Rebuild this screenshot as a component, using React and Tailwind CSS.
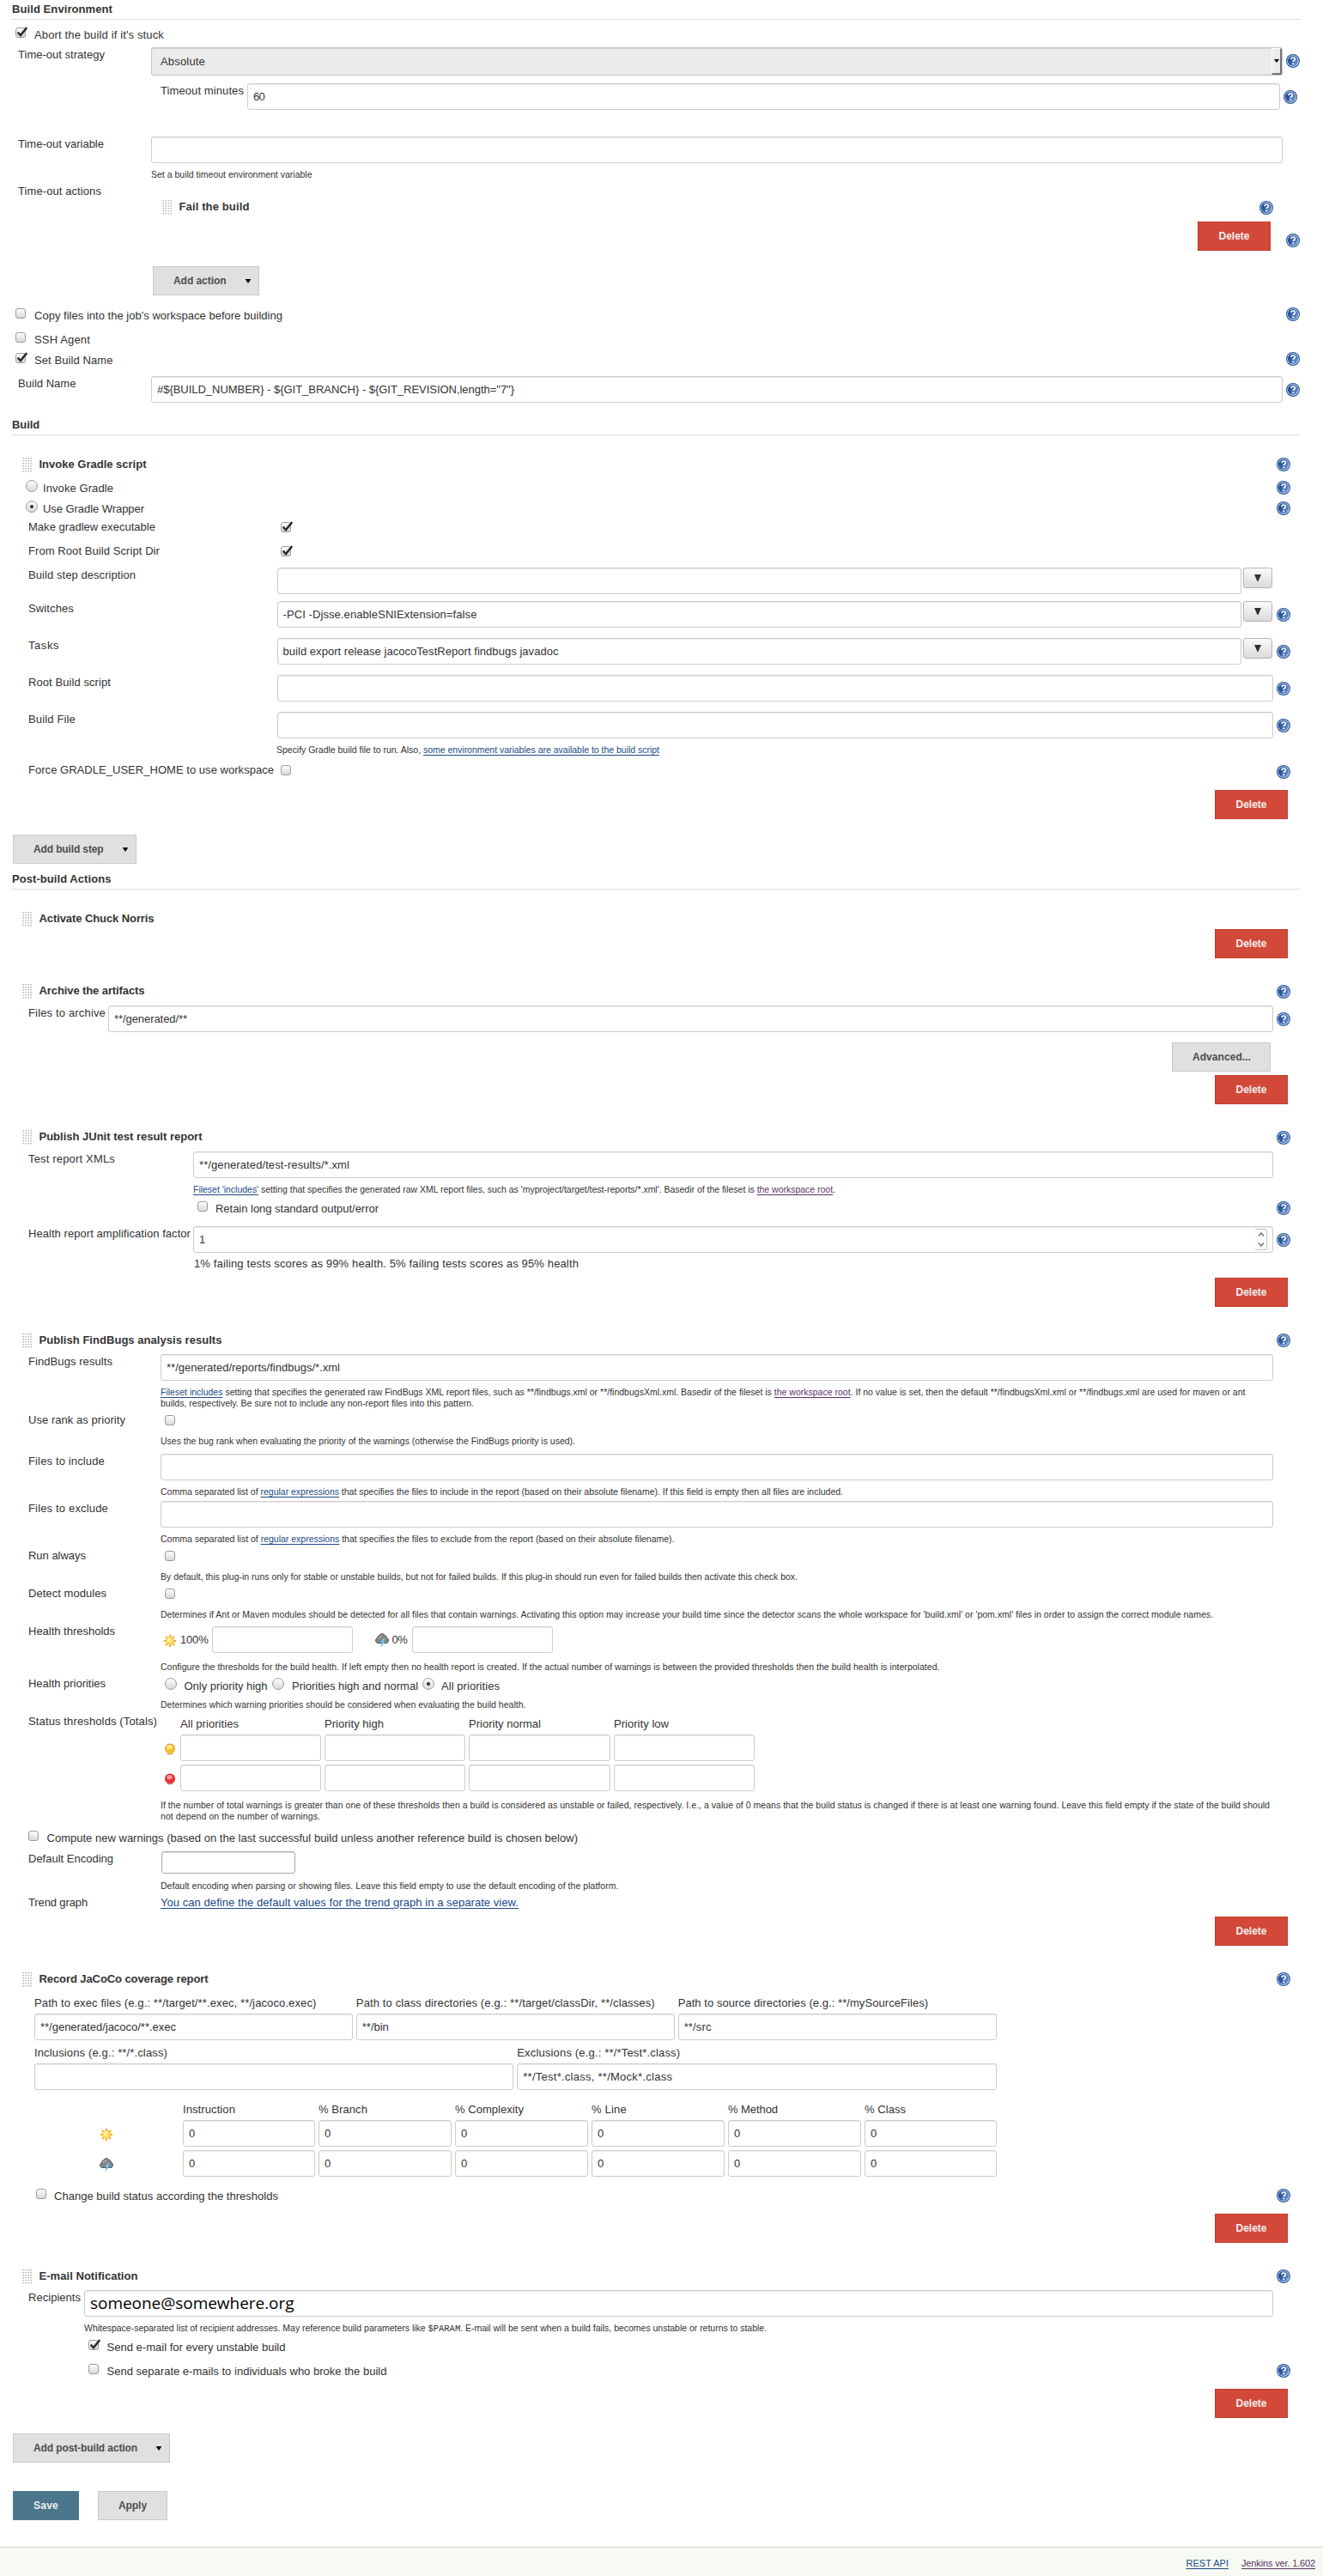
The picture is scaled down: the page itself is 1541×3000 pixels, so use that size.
import { useLayoutEffect, useRef, useState } from 'react';

/* Text whose letter spacing is adjusted so that the run spans `w` pixels. */
function T({ w, className = '', children }) {
  const ref = useRef(null);
  const [spacing, setSpacing] = useState(0);
  useLayoutEffect(() => {
    if (!w || !ref.current) return;
    const el = ref.current;
    el.style.letterSpacing = '0px';
    const natural = el.getBoundingClientRect().width;
    const next = (w - natural) / el.textContent.length;
    el.style.letterSpacing = `${next}px`;
    setSpacing(next);
  }, [w]);
  return (
    <span ref={ref} className={`inline-block shrink-0 whitespace-pre ${className}`} style={{ letterSpacing: `${spacing}px` }}>
      {children}
    </span>
  );
}

function Help({ className = '' }) {
  return (
    <svg viewBox="0 0 16 16" className={`h-4 w-4 shrink-0 ${className}`}>
      <defs>
        <linearGradient id="helpFill" x1="0" y1="0" x2="1" y2="0.6">
          <stop offset="0.2" stopColor="#1f4a94" />
          <stop offset="0.55" stopColor="#3763a6" />
          <stop offset="1" stopColor="#6f95cb" />
        </linearGradient>
      </defs>
      <circle cx="8" cy="8" r="8" fill="#2c5aa0" />
      <circle cx="8" cy="8" r="6.8" fill="#dfe9f6" />
      <circle cx="8" cy="8" r="6.1" fill="url(#helpFill)" />
      <path d="M5.9 6.1C6 4.6 7 4 8.1 4c1.2 0 2.2.7 2.2 1.9 0 1.6-2.1 1.6-2.1 3.2" fill="none" stroke="#fff" strokeWidth="1.6" />
      <rect x="7.3" y="10.4" width="1.8" height="1.8" fill="#fff" />
    </svg>
  );
}

function Sun({ className = '' }) {
  return (
    <svg viewBox="0 0 16 16" className={`h-4 w-4 shrink-0 ${className}`}>
      <path d="M8 .8v14.4M.8 8h14.4M2.9 2.9l10.2 10.2M13.1 2.9 2.9 13.1" stroke="#f5a73b" strokeWidth="1.9" />
      <circle cx="8" cy="8" r="5.1" fill="#f8b83c" />
      <circle cx="7.8" cy="7.8" r="4.4" fill="#fddc5c" />
      <circle cx="7" cy="7" r="2.4" fill="#fef3a6" />
    </svg>
  );
}

function Storm({ className = '' }) {
  return (
    <svg viewBox="0 0 16 16" className={`h-4 w-4 shrink-0 ${className}`}>
      <path d="M3.2 11.5C1.5 11.300.6 10.100.6 8.400c0-1.400.8-2.400 2-2.800C2.400 4.200 3.200 3.200 4.600 3 5.300 1.500 6.500.700 8 .700s2.800.8 3.400 2.200c1.500.1 2.400 1.200 2.200 2.700 1.200.4 1.900 1.400 1.900 2.800 0 1.700-1 2.900-2.700 3.100z" fill="#858684" stroke="#4c4d4b" />
      <path d="M4 5.600c.6-.9 1.300-1.200 2.200-1.200.4-1.200 1.200-1.900 2.300-1.900" fill="none" stroke="#b4b5b2" strokeWidth="1.200" />
      <path d="M9.800 6 6.200 10.700h2L6.800 15.600l5-6.300H9.500L12 6z" fill="#7fd4fb" stroke="#3fa9e6" strokeWidth=".5" />
    </svg>
  );
}

function Ball({ red }) {
  return (
    <svg viewBox="0 0 12 14" className="h-[14px] w-3 shrink-0">
      <ellipse cx="6" cy="12.300" rx="3.600" ry="1.200" fill="#b5b5b5" />
      <circle cx="6" cy="6.500" r="6" fill={red ? '#d3222a' : '#e3a32b'} />
      <circle cx="6" cy="6.700" r="5.200" fill={red ? '#ef3338' : '#fbc333'} />
      <ellipse cx="5.400" cy="4.600" rx="3.200" ry="2.600" fill={red ? '#fb9a98' : '#fde98c'} />
    </svg>
  );
}

function Grip() {
  const dots = [];
  for (let y = 0; y < 6; y++) for (let x = 0; x < 4; x++) dots.push([x * 3, y * 3]);
  return (
    <svg viewBox="0 0 12 17" className="h-[17px] w-3 shrink-0">
      {dots.map(([x, y]) => (
        <g key={`${x}-${y}`}>
          <rect x={x} y={y} width="2" height="1.500" fill="#d4d4d4" />
          <rect x={x + 1} y={y} width="1" height="1" fill="#b0b0b0" />
        </g>
      ))}
    </svg>
  );
}

function Check({ on, className = '' }) {
  return (
    <span className={`relative h-3 w-3 shrink-0 rounded-[3px] border border-[#9a9d98] bg-linear-to-b from-[#fdfdfd] to-[#d9d9d9] ${className}`}>
      {on && (
        <svg viewBox="0 0 16 14" className="absolute -top-[2px] -left-px h-[13px] w-4">
          <path d="M2.200 7.200 5.800 10.800 13.600 1.200" fill="none" stroke="#2b2f30" strokeWidth="2.700" />
        </svg>
      )}
    </span>
  );
}

function Radio({ on, className = '' }) {
  return (
    <span className={`flex h-[14px] w-[14px] shrink-0 items-center justify-center rounded-full border border-[#9a9d98] bg-linear-to-b from-[#fdfdfd] to-[#d9d9d9] ${className}`}>
      {on && <span className="h-1 w-1 rounded-full bg-[#2b2f30]" />}
    </span>
  );
}

function Input({ className = 'flex-1', value, vw, children }) {
  return (
    <div className={`flex h-[31px] items-center rounded-[3px] border border-[#ccc] bg-white pl-[6px] shadow-[inset_0_1px_1px_rgba(0,0,0,0.08)] ${className}`}>
      {value && <T w={vw}>{value}</T>}
      {children}
    </div>
  );
}

function Heading({ w, children }) {
  return (
    <h2 className="ml-[13px] h-[23px] w-[1501px] border-b border-[#ddd] pt-[3px] pl-px font-bold">
      <T w={w}>{children}</T>
    </h2>
  );
}

/* Title bar of a draggable block. */
function BlockTitle({ w, h = 'h-[25px]', help = true, helpTop = 'mt-px', children }) {
  return (
    <div className={`flex w-[1503px] pl-[26px] ${h}`}>
      <Grip />
      <T w={w} className="ml-[7.500px] font-bold">{children}</T>
      {help && <Help className={`ml-auto ${helpTop}`} />}
    </div>
  );
}

/* Labelled text field inside a block. */
function Field({ label, lw, labelW, h, value, vw, help, menu, children }) {
  return (
    <div className={`flex w-[1503px] items-start pl-[33px] ${h}`}>
      <div className={`shrink-0 pt-px ${labelW}`}>
        <T w={lw}>{label}</T>
      </div>
      {children || <Input value={value} vw={vw} />}
      {menu && (
        <div className="mr-px ml-[2px] flex h-6 w-[34px] shrink-0 items-center justify-center rounded-[3px] border border-[#b4b4b4] bg-linear-to-b from-[#fafafa] to-[#dadada]">
          <svg viewBox="0 0 8 8" className="h-2 w-2"><path d="M0 0h8L4.500 8h-1z" fill="#2e3436" /></svg>
        </div>
      )}
      <div className="ml-1 w-4 shrink-0 pt-2">{help && <Help />}</div>
    </div>
  );
}

/* Same as Field for the outer form, whose right edge is 11px further. */
function OuterField({ label, lw, h, help, children }) {
  return (
    <div className={`flex w-[1514px] items-start pl-[21px] ${h}`}>
      <div className="w-[155px] shrink-0 pt-px">
        <T w={lw}>{label}</T>
      </div>
      {children}
      <div className="ml-1 w-4 shrink-0 pt-[8px]">{help && <Help />}</div>
    </div>
  );
}

function Note({ h, pl, lines }) {
  return (
    <div className={`pt-px text-[10.500px] leading-[13px] ${pl} ${h}`}>
      {lines.map(([w, content], i) => (
        <div key={i} className="h-[13px]">
          <T w={w}>{content}</T>
        </div>
      ))}
    </div>
  );
}

function A({ children, visited }) {
  return <a className={`underline underline-offset-[1.500px] ${visited ? 'text-[#5c3566]' : 'text-[#204a87]'}`}>{children}</a>;
}

function CheckRow({ pl, h, on, label, w, gap = 'ml-[10px]', help, outer, helpTop = '' }) {
  return (
    <div className={`flex items-start ${outer ? 'w-[1514px]' : 'w-[1503px]'} ${pl} ${h}`}>
      <Check on={on} />
      <T w={w} className={`mt-px ${gap}`}>{label}</T>
      {help && <Help className={`ml-auto ${helpTop}`} />}
    </div>
  );
}

function RadioRow({ h, on, label, w }) {
  return (
    <div className={`flex w-[1503px] items-start pl-[30px] ${h}`}>
      <Radio on={on} />
      <T w={w} className="mt-[2px] ml-[6px]">{label}</T>
      <Help className="mt-px ml-auto" />
    </div>
  );
}

function LabelCheck({ label, w, labelW, h, on, help }) {
  return (
    <div className={`flex w-[1503px] items-start pl-[33px] ${h}`}>
      <div className={`-mt-[2px] shrink-0 ${labelW}`}><T w={w}>{label}</T></div>
      <Check on={on} />
      {help && <Help className="ml-auto" />}
    </div>
  );
}

function Delete() {
  return (
    <button className="flex h-[34px] w-[85px] items-center justify-center border border-[#c23b2b] bg-[#d24939] text-[12px] font-bold text-[#f5eeee]">
      <T w={36}>Delete</T>
    </button>
  );
}

function DeleteRow({ h }) {
  return <div className={`flex w-[1500px] justify-end ${h}`}><Delete /></div>;
}

function GreyButton({ className, w, menu, children }) {
  return (
    <button className={`flex h-[34px] items-center border border-[#c9c9c9] bg-[#e0e0e0] pl-[23px] text-[12px] font-bold text-[#4d4d4d] ${className}`}>
      <T w={w}>{children}</T>
      {menu && (
        <svg viewBox="0 0 8 6" className="mr-[8px] ml-auto h-[5px] w-2"><path d="M0 0h8L4 6z" fill="#000" /></svg>
      )}
    </button>
  );
}

const NOTE187 = 'pl-[187px]';
const LABELS = 'w-[154px]';

export default function App() {
  return (
    <main className="h-[3000px] w-[1541px] overflow-hidden bg-white font-['Liberation_Sans',Arial,sans-serif] text-[13px] leading-[16px] text-[#333]">
      <section>
        <Heading w={117}>Build Environment</Heading>
        <div className="pt-[9px]">
          <CheckRow outer on pl="pl-[18px]" h="h-[23px]" w={151} label="Abort the build if it's stuck" />
        </div>
        <OuterField label="Time-out strategy" lw={101} h="h-[42px]" help>
          <div className="flex h-[33px] flex-1 items-center rounded-[3px] border border-[#c4c4c4] bg-[#ebebeb] pl-[10px] shadow-[inset_0_1px_1px_rgba(0,0,0,0.1)]">
            <T w={52}>Absolute</T>
            <span className="ml-auto flex h-[31px] w-3 items-center justify-center border-t border-r-2 border-b-2 border-l border-t-white border-r-[#777] border-b-[#777] border-l-white bg-[#ececec]">
              <svg viewBox="0 0 6 4" className="h-1 w-[6px]"><path d="M0 0h6L3 4z" fill="#000" /></svg>
            </span>
          </div>
        </OuterField>
        <div className="flex h-[62px] w-[1511px] items-start pl-[187px]">
          <div className="w-[101px] shrink-0 pt-px"><T w={97}>Timeout minutes</T></div>
          <Input value="60" vw={13} />
          <Help className="mt-2 ml-1" />
        </div>
        <OuterField label="Time-out variable" lw={100} h="h-[37px]"><Input /></OuterField>
        <Note pl="pl-[176px]" h="h-[19px]" lines={[[187.500, 'Set a build timeout environment variable']]} />
        <div className="flex h-[95px] w-[1514px] items-start pl-[21px]">
          <div className="w-[168px] shrink-0"><T w={97}>Time-out actions</T></div>
          <div className="w-[1294px] pt-[18px]">
            <div className="flex h-[25px]">
              <Grip />
              <T w={82} className="ml-[7.500px] font-bold">Fail the build</T>
              <Help className="mt-px ml-auto" />
            </div>
            <div className="flex justify-end pr-[3px]"><Delete /></div>
          </div>
          <Help className="mt-[57px] ml-auto" />
        </div>
        <div className="h-[49px] pl-[178px]">
          <GreyButton menu className="w-[124px]" w={61.500}>Add action</GreyButton>
        </div>
        <CheckRow outer help helpTop="-mt-px" pl="pl-[18px]" h="h-[28px]" w={289} label="Copy files into the job's workspace before building" />
        <CheckRow outer pl="pl-[18px]" h="h-[24px]" w={65} label="SSH Agent" />
        <CheckRow outer on help helpTop="-mt-px" pl="pl-[18px]" h="h-[27px]" w={91.500} label="Set Build Name" />
        <OuterField label="Build Name" lw={67.500} h="h-[46px]" help>
          <Input value={'#${BUILD_NUMBER} - ${GIT_BRANCH} - ${GIT_REVISION,length="7"}'} vw={416} />
        </OuterField>
      </section>

      <section>
        <Heading w={32}>Build</Heading>
        <div className="pt-[26px]">
          <BlockTitle h="h-[26px]" helpTop="" w={125}>Invoke Gradle script</BlockTitle>
        </div>
        <RadioRow h="h-[24px]" label="Invoke Gradle" w={82} />
        <RadioRow on h="h-[25px]" label="Use Gradle Wrapper" w={118} />
        <LabelCheck on labelW="w-[294px]" h="h-[28px]" label="Make gradlew executable" w={148} />
        <LabelCheck on labelW="w-[294px]" h="h-[25px]" label="From Root Build Script Dir" w={153} />
        <Field labelW="w-[289.500px]" label="Build step description" lw={125} h="h-[39px]" menu />
        <Field labelW="w-[289.500px]" label="Switches" lw={53} h="h-[43px]" menu help value="-PCI -Djsse.enableSNIExtension=false" vw={226} />
        <Field labelW="w-[289.500px]" label="Tasks" lw={36} h="h-[43px]" menu help value="build export release jacocoTestReport findbugs javadoc" vw={321} />
        <Field labelW="w-[289.500px]" label="Root Build script" lw={96} h="h-[43px]" help />
        <Field labelW="w-[289.500px]" label="Build File" lw={55} h="h-[37px]" help />
        <Note pl="pl-[322px]" h="h-[25px]" lines={[[446, <>Specify Gradle build file to run. Also, <A>some environment variables are available to the build script</A></>]]} />
        <LabelCheck help labelW="w-[294px]" h="h-[29px]" label="Force GRADLE_USER_HOME to use workspace" w={286} />
        <DeleteRow h="h-[52px]" />
        <div className="h-[41px] pl-[15px]">
          <GreyButton menu className="w-[144px]" w={81.500}>Add build step</GreyButton>
        </div>
      </section>

      <section>
        <Heading w={115.500}>Post-build Actions</Heading>
        <div className="pt-[26px]">
          <BlockTitle h="h-[20px]" help={false} w={134}>Activate Chuck Norris</BlockTitle>
          <DeleteRow h="h-[64px]" />
        </div>

        <BlockTitle w={123}>Archive the artifacts</BlockTitle>
        <Field labelW="w-[93px]" label="Files to archive" lw={90} h="h-[43px]" help value="**/generated/**" vw={85} />
        <div className="flex h-[38px] w-[1480px] justify-end">
          <GreyButton className="w-[115px]" w={68}>Advanced...</GreyButton>
        </div>
        <DeleteRow h="h-[64px]" />

        <BlockTitle w={190}>Publish JUnit test result report</BlockTitle>
        <Field labelW="w-[192px]" label="Test report XMLs" lw={101} h="h-[37px]" value="**/generated/test-results/*.xml" vw={175} />
        <Note pl="pl-[225px]" h="h-[21px]" lines={[[748, <><A>Fileset 'includes'</A> setting that specifies the generated raw XML report files, such as 'myproject/target/test-reports/*.xml'. Basedir of the fileset is <A visited>the workspace root</A>.</>]]} />
        <CheckRow help pl="pl-[230px]" h="h-[29px]" gap="ml-[9px]" w={190} label="Retain long standard output/error" />
        <Field labelW="w-[192px]" label="Health report amplification factor" lw={189} h="h-[36px]" help>
          <Input value="1" vw={6}>
            <span className="mr-[6px] ml-auto flex h-[25px] w-[14px] flex-col items-center justify-around rounded-r-[3px] border border-l-0 border-[#c4c4c4] bg-[#fafafa]">
              <svg viewBox="0 0 8 5" className="h-[5px] w-2"><path d="M1 4.500 4 1l3 3.500" fill="none" stroke="#777" strokeWidth="1.500" /></svg>
              <svg viewBox="0 0 8 5" className="h-[5px] w-2"><path d="M1 .5 4 4 7 .5" fill="none" stroke="#777" strokeWidth="1.500" /></svg>
            </span>
          </Input>
        </Field>
        <div className="h-[24px] pl-[226px]"><T w={448}>1% failing tests scores as 99% health. 5% failing tests scores as 95% health</T></div>
        <DeleteRow h="h-[65px]" />

        <BlockTitle h="h-[24px]" helpTop="" w={213}>Publish FindBugs analysis results</BlockTitle>
        <Field labelW={LABELS} label="FindBugs results" lw={98} h="h-[37px]" value="**/generated/reports/findbugs/*.xml" vw={202} />
        <Note
          pl={NOTE187}
          h="h-[34px]"
          lines={[
            [1263.500, <><A>Fileset includes</A> setting that specifies the generated raw FindBugs XML report files, such as **/findbugs.xml or **/findbugsXml.xml. Basedir of the fileset is <A visited>the workspace root</A>. If no value is set, then the default **/findbugsXml.xml or **/findbugs.xml are used for maven or ant</>],
            [365, 'builds, respectively. Be sure not to include any non-report files into this pattern.'],
          ]}
        />
        <LabelCheck labelW="w-[159px]" h="h-[23px]" label="Use rank as priority" w={113} />
        <Note pl={NOTE187} h="h-[22px]" lines={[[483, 'Uses the bug rank when evaluating the priority of the warnings (otherwise the FindBugs priority is used).']]} />
        <Field labelW={LABELS} label="Files to include" lw={89} h="h-[37px]" />
        <Note pl={NOTE187} h="h-[18px]" lines={[[795, <>Comma separated list of <A>regular expressions</A> that specifies the files to include in the report (based on their absolute filename). If this field is empty then all files are included.</>]]} />
        <Field labelW={LABELS} label="Files to exclude" lw={93} h="h-[37px]" />
        <Note pl={NOTE187} h="h-[21px]" lines={[[598.500, <>Comma separated list of <A>regular expressions</A> that specifies the files to exclude from the report (based on their absolute filename).</>]]} />
        <LabelCheck labelW="w-[159px]" h="h-[23px]" label="Run always" w={67} />
        <Note pl={NOTE187} h="h-[21px]" lines={[[742, 'By default, this plug-in runs only for stable or unstable builds, but not for failed builds. If this plug-in should run even for failed builds then activate this check box.']]} />
        <LabelCheck labelW="w-[159px]" h="h-[23px]" label="Detect modules" w={91} />
        <Note pl={NOTE187} h="h-[21px]" lines={[[1226, "Determines if Ant or Maven modules should be detected for all files that contain warnings. Activating this option may increase your build time since the detector scans the whole workspace for 'build.xml' or 'pom.xml' files in order to assign the correct module names."]]} />

        <div className="flex h-[40px] items-start pl-[33px]">
          <div className="w-[157px] shrink-0 -mt-[2px]"><T w={101}>Health thresholds</T></div>
          <div className="flex h-[31px] items-center">
            <Sun className="mt-[3px]" />
            <T w={32.500} className="mr-1 ml-[4px]">100%</T>
            <Input className="w-[164px]" />
            <Storm className="ml-[26px]" />
            <T w={18} className="mr-[5px] ml-1">0%</T>
            <Input className="w-[164px]" />
          </div>
        </div>
        <Note pl={NOTE187} h="h-[20px]" lines={[[907.500, 'Configure the thresholds for the build health. If left empty then no health report is created. If the actual number of warnings is between the provided thresholds then the build health is interpolated.']]} />
        <div className="flex h-[24px] items-start pl-[33px]">
          <div className="-mt-px w-[159px] shrink-0"><T w={90}>Health priorities</T></div>
          <div className="flex w-[125px] shrink-0">
            <Radio />
            <T w={97} className="mt-[2px] ml-[8.500px]">Only priority high</T>
          </div>
          <div className="flex w-[175px] shrink-0">
            <Radio />
            <T w={147} className="mt-[2px] ml-[9px]">Priorities high and normal</T>
          </div>
          <Radio on />
          <T w={68} className="mt-[2px] ml-[8px]">All priorities</T>
        </div>
        <Note pl={NOTE187} h="h-[19px]" lines={[[425.500, 'Determines which warning priorities should be considered when evaluating the build health.']]} />
        <div className="flex h-[98px] items-start pl-[33px]">
          <div className="w-[159px] shrink-0"><T w={150}>Status thresholds (Totals)</T></div>
          <div className="grid grid-cols-[14px_164px_164px_165px_164px] gap-x-1">
            <span />
            <div className="h-[23px] pt-[3px]"><T w={68}>All priorities</T></div>
            <div className="pt-[3px]"><T w={69}>Priority high</T></div>
            <div className="pt-[3px]"><T w={84}>Priority normal</T></div>
            <div className="pt-[3px]"><T w={64}>Priority low</T></div>
            {[false, true].map((red) => [
              <div key={`b${red}`} className="flex h-[35px] pt-[10px]"><Ball red={red} /></div>,
              ...[0, 1, 2, 3].map((i) => <Input key={`${red}${i}`} className="w-full" />),
            ])}
          </div>
        </div>
        <Note
          pl={NOTE187}
          h="h-[37px]"
          lines={[
            [1292, 'If the number of total warnings is greater than one of these thresholds then a build is considered as unstable or failed, respectively. I.e., a value of 0 means that the build status is changed if there is at least one warning found. Leave this field empty if the state of the build should'],
            [186, 'not depend on the number of warnings.'],
          ]}
        />
        <CheckRow pl="pl-[33px]" h="h-[24px]" gap="ml-[9.500px]" w={618.500} label="Compute new warnings (based on the last successful build unless another reference build is chosen below)" />
        <div className="flex h-[33px] items-start pl-[33px]">
          <div className="w-[155px] shrink-0 pt-px"><T w={99}>Default Encoding</T></div>
          <div className="h-[26px] w-[156px] rounded-[3px] border border-[#aaaca8] bg-white shadow-[inset_0_1px_1px_rgba(0,0,0,0.15)]" />
        </div>
        <Note pl={NOTE187} h="h-[19px]" lines={[[533.500, 'Default encoding when parsing or showing files. Leave this field empty to use the default encoding of the platform.']]} />
        <div className="flex h-[24px] pl-[33px]">
          <div className="w-[154px] shrink-0"><T w={69}>Trend graph</T></div>
          <T w={417}><A>You can define the default values for the trend graph in a separate view.</A></T>
        </div>
        <DeleteRow h="h-[65px]" />

        <BlockTitle h="h-[28px]" helpTop="" w={197}>Record JaCoCo coverage report</BlockTitle>
        <div className="ml-10 grid w-[1120.500px] grid-cols-3 gap-x-1">
          <div className="h-[20px]"><T w={328.500}>Path to exec files (e.g.: **/target/**.exec, **/jacoco.exec)</T></div>
          <div><T w={348}>Path to class directories (e.g.: **/target/classDir, **/classes)</T></div>
          <div><T w={291.500}>Path to source directories (e.g.: **/mySourceFiles)</T></div>
          <div className="flex h-[38px]"><Input value="**/generated/jacoco/**.exec" vw={158} /></div>
          <div className="flex"><Input value="**/bin" vw={31} /></div>
          <div className="flex"><Input value="**/src" vw={32} /></div>
        </div>
        <div className="ml-10 grid w-[1120.500px] grid-cols-2 gap-x-1">
          <div className="h-[20px]"><T w={155}>Inclusions (e.g.: **/*.class)</T></div>
          <div><T w={190}>Exclusions (e.g.: **/*Test*.class)</T></div>
          <div className="flex h-[46px]"><Input /></div>
          <div className="flex"><Input value="**/Test*.class, **/Mock*.class" vw={174} /></div>
        </div>
        <div className="ml-[116px] grid grid-cols-[93px_154px_155px_155px_155px_155px_154px] gap-x-1">
          <span />
          <div className="h-[20px]"><T w={61}>Instruction</T></div>
          <div><T w={57}>% Branch</T></div>
          <div><T w={80}>% Complexity</T></div>
          <div><T w={41}>% Line</T></div>
          <div><T w={58}>% Method</T></div>
          <div><T w={48}>% Class</T></div>
          <Sun className="mt-[9px]" />
          {[0, 1, 2, 3, 4, 5].map((i) => (
            <div key={i} className="flex h-[35px]"><Input value="0" vw={6.500} /></div>
          ))}
          <Storm className="mt-[9px]" />
          {[0, 1, 2, 3, 4, 5].map((i) => (
            <div key={i} className="flex h-[45px]"><Input value="0" vw={6.500} /></div>
          ))}
        </div>
        <CheckRow help pl="pl-[42px]" h="h-[29px]" gap="ml-[9px]" w={261} label="Change build status according the thresholds" />
        <DeleteRow h="h-[65px]" />

        <BlockTitle h="h-[24px]" helpTop="" w={115}>E-mail Notification</BlockTitle>
        <Field labelW="w-[65px]" label="Recipients" lw={61} h="h-[37px]">
          <Input>
            <T w={237.500} className="pb-[2px] font-['Open_Sans','Noto_Sans',sans-serif] text-[19px] leading-[22px] font-medium text-black">someone@somewhere.org</T>
          </Input>
        </Field>
        <Note
          pl="pl-[98px]"
          h="h-[21px]"
          lines={[[795, <>Whitespace-separated list of recipient addresses. May reference build parameters like <code className="font-['Liberation_Mono',monospace] text-[10.500px]">$PARAM</code>. E-mail will be sent when a build fails, becomes unstable or returns to stable.</>]]}
        />
        <CheckRow on pl="pl-[103px]" h="h-[28px]" gap="ml-[9.500px]" w={208} label="Send e-mail for every unstable build" />
        <CheckRow help pl="pl-[103px]" h="h-[29px]" gap="ml-[9.500px]" w={326} label="Send separate e-mails to individuals who broke the build" />
        <DeleteRow h="h-[52px]" />
        <div className="h-[67px] pl-[15px]">
          <GreyButton menu className="w-[183px]" w={121}>Add post-build action</GreyButton>
        </div>
      </section>

      <div className="flex h-[65px] gap-[22px] pl-[15px]">
        <button className="flex h-[34px] w-[77px] items-center justify-center border border-[#4a7b96] bg-[#4b758b] text-[12px] font-bold text-[#eeeeee]">
          <T w={29}>Save</T>
        </button>
        <GreyButton className="w-[81px]" w={33}>Apply</GreyButton>
      </div>
      <footer className="flex h-[34px] justify-end gap-[15px] border-t border-[#d3d7cf] bg-[#f6faf2] pt-[10px] pr-[9px] text-[11px]">
        <T w={49.500}><A>REST API</A></T>
        <T w={86}><A visited>Jenkins ver. 1.602</A></T>
      </footer>
    </main>
  );
}
